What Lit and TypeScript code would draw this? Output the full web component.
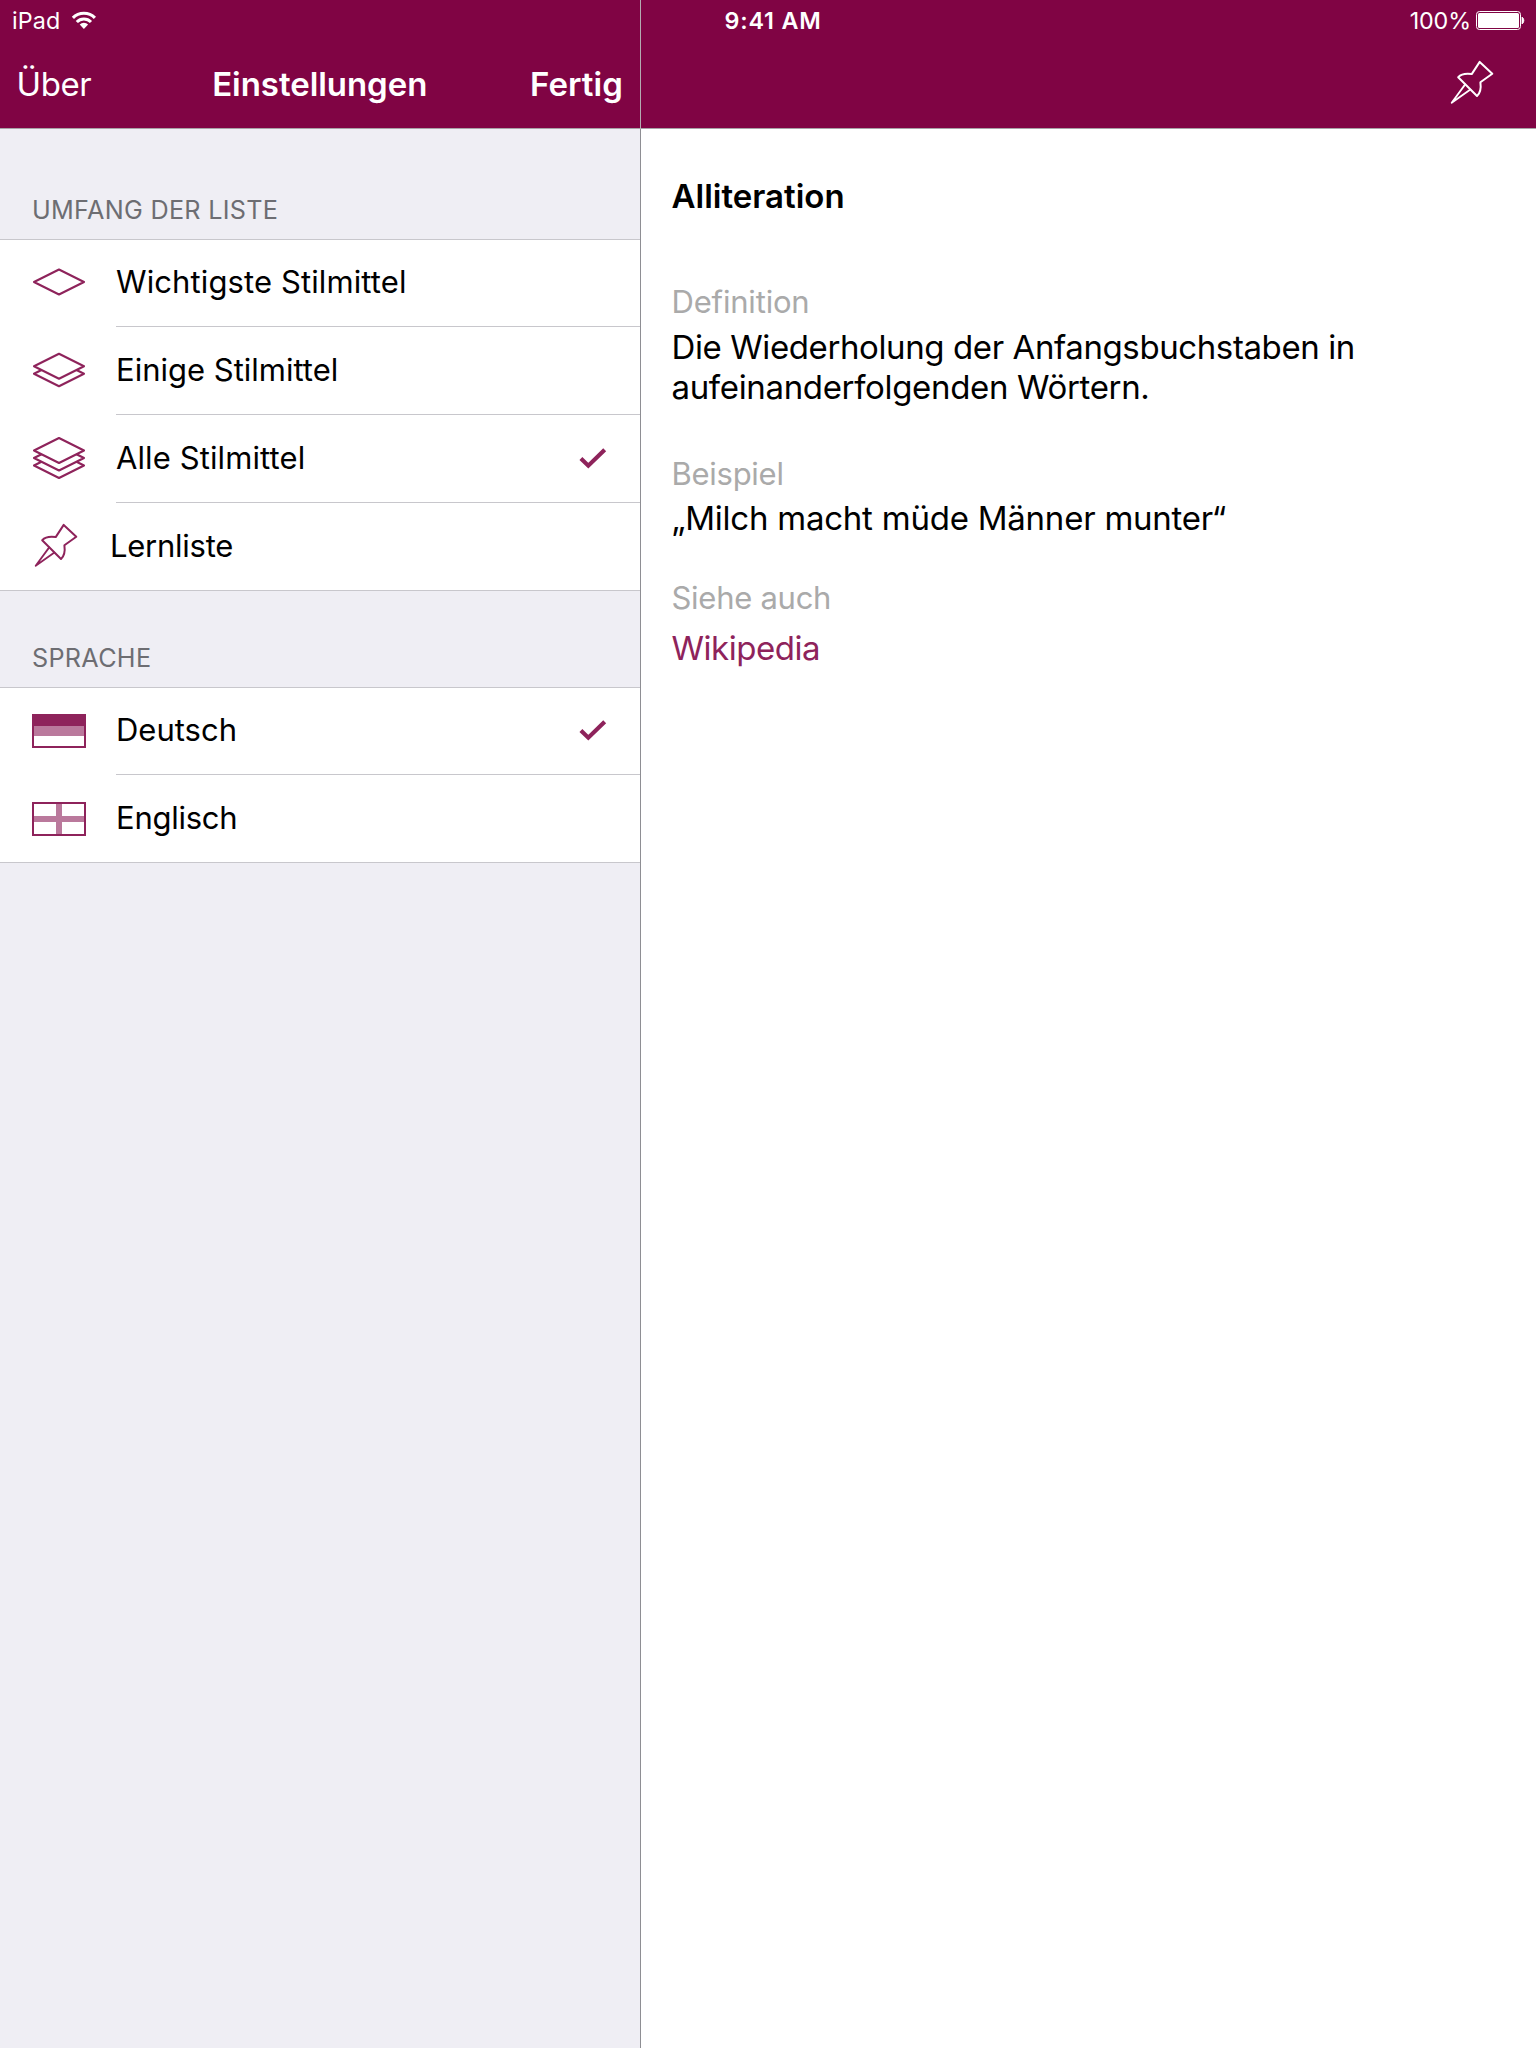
import { LitElement, html, css, svg, nothing } from "lit";
import { customElement, property, state } from "lit/decorators.js";

/** Pushpin outline, used in the toolbar and for the study list. */
@customElement("pin-icon")
class PinIcon extends LitElement {
  static styles = css`
    :host { display: block; width: 44px; height: 45px; }
    .pin { display: block; fill: none; stroke: currentColor; stroke-width: 2; stroke-linejoin: round; stroke-linecap: round; }
    .needle { stroke-width: 1.8; }
  `;
  render() {
    return html`<svg class="pin" width="44" height="45" viewBox="0 0 44 45">
      <path d="M29.7 1.9 L42.3 13.8 L30.4 22.3 C31.2 28 30.6 32.6 27 36 L8.2 17.2 C11.2 14 16 13.3 21.7 14.1 Z" />
      <path class="needle" d="M15.2 24.4 L1.7 42.8 L20.4 29.6" />
    </svg>`;
  }
}

/** One, two or three stacked sheets. */
@customElement("layers-icon")
class LayersIcon extends LitElement {
  static styles = css`
    :host { display: block; }
    .layers { display: block; fill: none; stroke: currentColor; stroke-width: 2.1; stroke-linejoin: round; }
  `;
  @property({ type: Number }) count = 1;
  render() {
    const top = 22 - (this.count - 1) * 3.75;
    const sheets = [];
    for (let i = 1; i < this.count; i++) {
      const y = top + i * 7.5;
      sheets.push(svg`<path d="M9.5 ${y - 3.75} L2 ${y} L27 ${y + 12.5} L52 ${y} L44.5 ${y - 3.75}" />`);
    }
    return html`<svg class="layers" width="54" height="44" viewBox="0 0 54 44">
      <path d="M2 ${top} L27 ${top - 12.5} L52 ${top} L27 ${top + 12.5} Z" />${sheets}
    </svg>`;
  }
}

@customElement("flag-icon")
class FlagIcon extends LitElement {
  static styles = css`
    :host { display: block; }
    .flag { display: block; }
    .solid { fill: #8e235b; }
    .tint { fill: #ba799c; }
    .frame { fill: none; stroke: #8e235b; stroke-width: 2; }
  `;
  @property() country = "de";
  render() {
    return html`<svg class="flag" width="54" height="34" viewBox="0 0 54 34">
      ${this.country === "de"
        ? svg`<rect class="solid" width="54" height="12" /><rect class="tint" x="2" y="12" width="50" height="10" />`
        : svg`<path class="tint" d="M24 2h6v12h22v6H30v12h-6V20H2v-6h22z" />`}
      <rect class="frame" x="1" y="1" width="52" height="32" />
    </svg>`;
  }
}

interface Item {
  id: string;
  label: string;
  icon: unknown;
}

@customElement("settings-list")
class SettingsList extends LitElement {
  static styles = css`
    :host { display: block; }
    .list { display: flex; flex-direction: column; background: #fff; border: solid #c8c7cc; border-width: 1px 0; }
    .row { display: flex; height: 88px; color: #8e235b; }
    .row:first-child { margin-top: -1px; }
    .row:last-child { height: 87px; }
    .icon { display: flex; align-items: center; height: 86px; padding: 0 30px 0 32px; }
    .icon.flag { height: 88px; }
    .icon.pin { height: 84px; padding: 0 32px 0 34px; }
    .cell { flex: 1; display: flex; justify-content: space-between; box-sizing: border-box; padding: 0 33px 0 0; border-bottom: 1px solid #c8c7cc; }
    .row:last-child .cell { border-bottom: 0; }
    .label { font-size: 31px; line-height: 85px; letter-spacing: 0; color: #000; white-space: nowrap; }
    .label.wide { letter-spacing: 0.11px; }
    .label.tight { letter-spacing: -0.25px; }
    .check { margin-top: 32.4px; fill: none; stroke: #8e235b; stroke-width: 4.2; }
  `;
  @property({ attribute: false }) items: Item[] = [];
  @property() selected = "";
  private pick(id: string) {
    this.dispatchEvent(new CustomEvent("pick", { detail: id }));
  }
  render() {
    return html`<div class="list">
      ${this.items.map(
        (it) => html`<div class="row" @click=${() => this.pick(it.id)}>
          <div class="icon ${it.id === "pinned" ? "pin" : it.id.length === 2 ? "flag" : ""}">${it.icon}</div>
          <div class="cell">
            <span class="label ${it.id === "pinned" || it.id === "en" ? "tight" : it.id === "top" || it.id === "all" ? "wide" : ""}">${it.label}</span>
            ${it.id === this.selected
              ? html`<svg class="check" width="28" height="24" viewBox="0 0 28 24"><path d="M1.9 11.6 L9.3 18.7 L25.7 2.8" /></svg>`
              : nothing}
          </div>
        </div>`
      )}
    </div>`;
  }
}

@customElement("app-root")
class AppRoot extends LitElement {
  static styles = css`
    :host { display: block; font-family: Inter, "Liberation Sans", sans-serif; }
    .screen { display: grid; grid-template-columns: 640px 1px 1fr; height: 2048px; overflow: hidden; background: #fff; }
    .pane { display: flex; flex-direction: column; min-width: 0; }
    .master { background: #efeef4; }
    .bar { height: 128px; background: #800444; color: #fff; border-bottom: 1px solid #a8a3a7; }
    .divider { background: linear-gradient(#b3acb1 129px, #8e8e93 129px); }
    .status { display: flex; height: 40px; font-size: 23.3px; line-height: 41px; white-space: nowrap; }
    .status.left { padding-left: 12px; gap: 11px; letter-spacing: 0.1px; }
    .status.right { justify-content: space-between; padding: 0 11px 0 83.4px; }
    .wifi { margin-top: 10px; }
    .time { font-weight: 600; letter-spacing: 0.85px; }
    .power { display: flex; gap: 5px; letter-spacing: -0.1px; }
    .battery { margin-top: 11px; }
    .nav { display: grid; grid-template-columns: 1fr auto 1fr; height: 88px; padding: 0 17px 0 16.5px; font-size: 33px; line-height: 88px; }
    .about { letter-spacing: -0.43px; }
    .title, .done { font-weight: 600; }
    .title { letter-spacing: -0.05px; }
    .done { text-align: right; letter-spacing: 0.09px; }
    .tools { display: flex; justify-content: flex-end; padding: 20px 42px 0 0; }
    .group { display: flex; align-items: flex-end; height: 96px; box-sizing: border-box; padding: 0 32px 14px; font-size: 25.2px; line-height: 30px; letter-spacing: 0.3px; color: #6d6d72; }
    .group.first { height: 110px; }
    .article { display: flex; flex-direction: column; padding: 47px 30px 0 30.5px; color: #000; }
    .headline { margin: 0; font-size: 33px; line-height: 40px; font-weight: 600; }
    .caption { font-size: 31px; line-height: 37px; letter-spacing: -0.27px; color: #aaa; }
    .definition { margin-top: 67px; letter-spacing: -0.18px; }
    .example { margin-top: 48px; }
    .see { margin-top: 41px; }
    .text { margin: 6px 0 0; font-size: 33px; line-height: 40px; letter-spacing: -0.23px; }
    .meaning { margin-top: 7px; letter-spacing: -0.4px; }
    .second { letter-spacing: -0.34px; }
    .link { margin: 12px 0 0; font-size: 33px; line-height: 40px; letter-spacing: -0.47px; color: #8e235b; text-decoration: none; }
  `;
  @state() private scope = "all";
  @state() private language = "de";

  private scopes: Item[] = [
    { id: "top", label: "Wichtigste Stilmittel", icon: html`<layers-icon count="1"></layers-icon>` },
    { id: "some", label: "Einige Stilmittel", icon: html`<layers-icon count="2"></layers-icon>` },
    { id: "all", label: "Alle Stilmittel", icon: html`<layers-icon count="3"></layers-icon>` },
    { id: "pinned", label: "Lernliste", icon: html`<pin-icon></pin-icon>` },
  ];
  private languages: Item[] = [
    { id: "de", label: "Deutsch", icon: html`<flag-icon country="de"></flag-icon>` },
    { id: "en", label: "Englisch", icon: html`<flag-icon country="en"></flag-icon>` },
  ];

  render() {
    return html`<div class="screen">
      <section class="pane master">
        <header class="bar">
          <div class="status left">
            <span>iPad</span>
            <svg class="wifi" width="26" height="20" viewBox="0 0 26 20">
              <path fill="none" stroke="#fff" stroke-width="3.1" d="M1.9 7.9 A15.4 15.4 0 0 1 23.9 7.9 M5.8 12 A10 10 0 0 1 20 12" />
              <path fill="#fff" d="M12.9 18.9 L8.7 14.5 A6.1 6.1 0 0 1 17.1 14.5 Z" />
            </svg>
          </div>
          <nav class="nav">
            <span class="about">Über</span>
            <span class="title">Einstellungen</span>
            <span class="done">Fertig</span>
          </nav>
        </header>
        <div class="group first">UMFANG DER LISTE</div>
        <settings-list .items=${this.scopes} .selected=${this.scope} @pick=${(e: CustomEvent) => (this.scope = e.detail)}></settings-list>
        <div class="group">SPRACHE</div>
        <settings-list .items=${this.languages} .selected=${this.language} @pick=${(e: CustomEvent) => (this.language = e.detail)}></settings-list>
      </section>
      <div class="divider"></div>
      <section class="pane">
        <header class="bar">
          <div class="status right">
            <span class="time">9:41 AM</span>
            <span class="power">
              <span>100%</span>
              <svg class="battery" width="49" height="19" viewBox="0 0 49 19">
                <rect x="0.5" y="0.5" width="44" height="18" rx="3" fill="none" stroke="#fff" />
                <rect x="2" y="2" width="41" height="15" rx="1.5" fill="#fff" />
                <path d="M46 6 A4.2 4.2 0 0 1 46 13 Z" fill="#fff" stroke="#fff" stroke-width="0.8" />
              </svg>
            </span>
          </div>
          <div class="tools"><pin-icon></pin-icon></div>
        </header>
        <article class="article">
          <h1 class="headline">Alliteration</h1>
          <div class="caption definition">Definition</div>
          <p class="text meaning">Die Wiederholung der Anfangsbuchstaben in<br /><span class="second">aufeinanderfolgenden Wörtern.</span></p>
          <div class="caption example">Beispiel</div>
          <p class="text">„Milch macht müde Männer munter“</p>
          <div class="caption see">Siehe auch</div>
          <a class="link">Wikipedia</a>
        </article>
      </section>
    </div>`;
  }
}
